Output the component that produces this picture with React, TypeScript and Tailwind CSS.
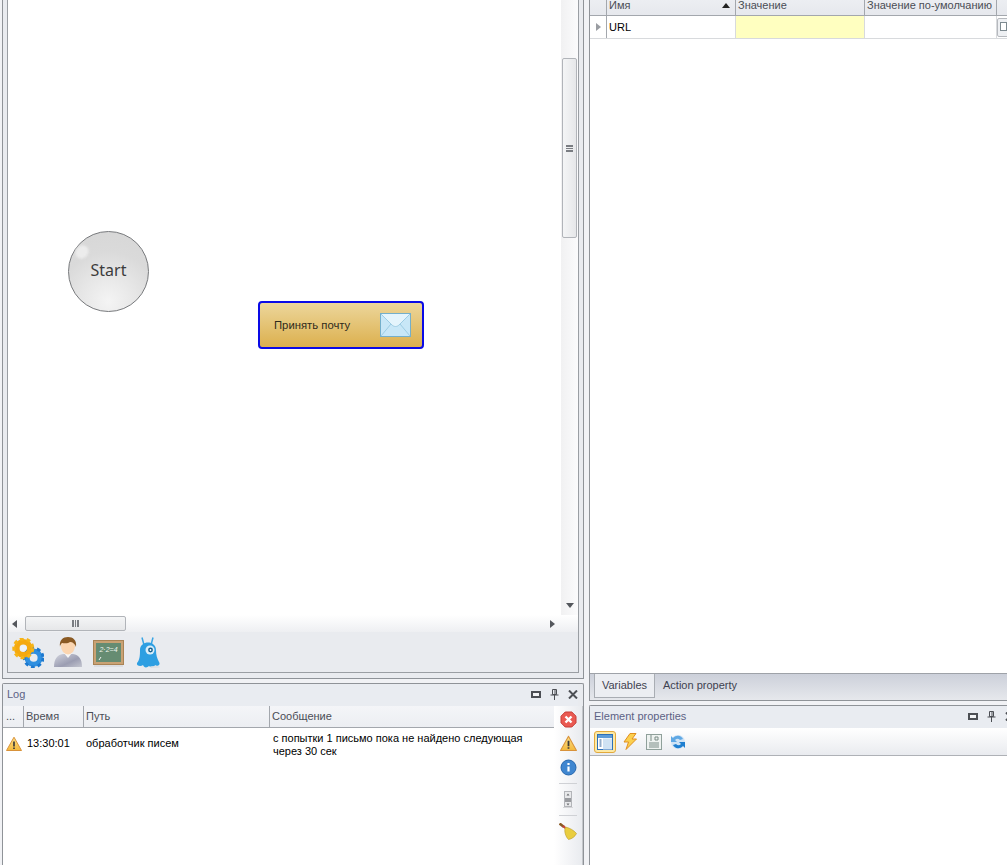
const FONT = "font-['Liberation_Sans','Noto_Sans',sans-serif]";

function Gears() {
  return (
    <svg width="32" height="30" viewBox="0 0 34 32">
      <circle cx="23" cy="21" r="7" fill="none" stroke="#2f8fe0" strokeWidth="5.500" />
      <circle cx="23" cy="21" r="10" fill="none" stroke="#1c78cf" strokeWidth="3" strokeDasharray="4 3.2" />
      <circle cx="12" cy="11" r="7" fill="none" stroke="#f5a90f" strokeWidth="6" />
      <circle cx="12" cy="11" r="10" fill="none" stroke="#f7b416" strokeWidth="3.500" strokeDasharray="4 3.2" />
      <circle cx="12" cy="11" r="3.500" fill="#eef2f6" />
    </svg>
  );
}

function Person() {
  return (
    <svg width="30" height="32" viewBox="0 0 30 32">
      <defs>
        <linearGradient id="suit" x1="0" y1="0" x2="1" y2="1">
          <stop offset="0" stopColor="#d2d4de" />
          <stop offset="0.6" stopColor="#9b9db2" />
          <stop offset="1" stopColor="#c4c6d0" />
        </linearGradient>
      </defs>
      <path d="M1 31c0-8 3-12 9-13h10c6 1 9 5 9 13z" fill="url(#suit)" />
      <path d="M11 17h8l-4 5z" fill="#f6f6f6" />
      <ellipse cx="15" cy="10" rx="7" ry="8.5" fill="#fbd5b0" />
      <path d="M7 11C6 4 10 1 15 1s9 3 8 10c-1-3-3-5-6-5-2 2-7 1-8 1-1 1-2 2-2 4z" fill="#8a5a24" />
    </svg>
  );
}

function Board() {
  return (
    <svg width="31" height="27" viewBox="0 0 31 27">
      <rect x="0.5" y="0.5" width="30" height="24" fill="#c9a274" stroke="#a98355" />
      <rect x="3" y="3" width="25" height="19" fill="#668c72" />
      <text x="15.500" y="12" textAnchor="middle" fontSize="7" fontStyle="italic" fill="#eef4ee" fontFamily="Liberation Sans, sans-serif">2·2=4</text>
      <path d="M6 20l2-3" stroke="#f4f6f4" strokeWidth="1" fill="none" />
      <path d="M1 26h29" stroke="#cfd1d5" strokeWidth="1" />
    </svg>
  );
}

function Monster() {
  return (
    <svg width="25" height="32" viewBox="0 0 25 32">
      <path d="M8 8L6 0.500M15 8l2-7.500" stroke="#3aa5e4" strokeWidth="1.500" fill="none" />
      <path d="M4 13C4 3 20 3 20 13c0 5 1 8 3 12 2 3-2 5-4 3-1 3-4 3-6 1-2 2-5 2-6-1-2 2-7 1-6-2 3-3 3-9 3-13z" fill="#2e9fe2" />
      <circle cx="14" cy="13" r="4.500" fill="#dbeef9" />
      <circle cx="14.500" cy="13" r="2.400" fill="#15608f" />
      <circle cx="14.500" cy="13" r="0.900" fill="#fff" />
      <ellipse cx="19" cy="30" rx="5" ry="1" fill="#dfe1e5" />
    </svg>
  );
}

function Warning({ size = 16 }: { size?: number }) {
  return (
    <svg width={size} height={size} viewBox="0 0 16 16">
      <defs>
        <linearGradient id="warn" x1="0" y1="0" x2="0" y2="1">
          <stop offset="0" stopColor="#fbe08a" />
          <stop offset="1" stopColor="#f4b93c" />
        </linearGradient>
      </defs>
      <path d="M8 1.200L15.500 14.500H0.500z" fill="url(#warn)" stroke="#d8923a" strokeLinejoin="round" />
      <path d="M8 5.500v5M8 11.500v1.500" stroke="#3b3b3b" strokeWidth="1.700" />
    </svg>
  );
}

function ErrorIcon() {
  return (
    <svg width="17" height="17" viewBox="0 0 17 17">
      <path d="M5.200 1h6.600L16 5.200v6.600L11.800 16H5.200L1 11.800V5.200z" fill="#ea5a52" stroke="#c63c36" />
      <path d="M5.500 5.500l6 6M11.500 5.500l-6 6" stroke="#fff" strokeWidth="2.400" />
    </svg>
  );
}

function InfoIcon() {
  return (
    <svg width="17" height="17" viewBox="0 0 17 17">
      <circle cx="8.500" cy="8.500" r="7.500" fill="#3f86d0" stroke="#2566ad" />
      <path d="M8.500 7.500v5" stroke="#fff" strokeWidth="2.200" />
      <path d="M8.500 4v2" stroke="#fff" strokeWidth="2.200" />
    </svg>
  );
}

function ScrollIcon() {
  return (
    <svg width="10" height="17" viewBox="0 0 10 17">
      <rect x="1.500" y="0.500" width="7" height="15" fill="#e8e9eb" stroke="#b3b5b9" />
      <rect x="2" y="7" width="6" height="4" fill="#9a9ca0" />
      <path d="M5 2.500l-1.500 2h3zM5 14.500l-1.500-2h3z" fill="#6a6c70" />
      <path d="M0 16.500h10" stroke="#d5d6d9" />
    </svg>
  );
}

function Broom() {
  return (
    <svg width="18" height="17" viewBox="0 0 18 17">
      <path d="M0.500 0.500l4.500 3.500" stroke="#8a5a24" strokeWidth="2.600" />
      <path d="M4 3l3 2.500" stroke="#c8413a" strokeWidth="2.200" />
      <path d="M6.500 4c4.500 1 8.500 3.500 11 6.500-1.500 3-4.500 5.500-8 6C7 14 4.500 8.500 6.500 4z" fill="#e9cd3f" stroke="#b89a2a" strokeWidth="0.600" />
    </svg>
  );
}

function Maximize() {
  return <div className="h-[7px] w-[10px] border-2 border-[#4c4f54] bg-[#f3f4f6]" />;
}

function Pin() {
  return (
    <svg width="9" height="11" viewBox="0 0 9 11">
      <path d="M2.500 0.500h4v5h-4zM0.500 6h8M4.500 6v5M5 1v4" stroke="#4c4f54" fill="none" />
    </svg>
  );
}

function Close() {
  return (
    <svg width="10" height="9" viewBox="0 0 10 9">
      <path d="M1 0.500l8 8M9 0.500l-8 8" stroke="#4c4f54" strokeWidth="2" />
    </svg>
  );
}

function PanelTitle({ title }: { title: string }) {
  return (
    <div className="flex h-[22px] shrink-0 items-center justify-between bg-[#e9ecf1] pb-px pl-[4px] text-[11px] text-[#5c6285]">
      <span>{title}</span>
      <div className="flex items-center gap-[9px]">
        <Maximize />
        <Pin />
        <Close />
      </div>
    </div>
  );
}

function Envelope() {
  return (
    <svg width="31" height="24" viewBox="0 0 31 24">
      <rect x="0.500" y="0.500" width="30" height="23" fill="#c8e7f7" stroke="#74afcb" />
      <path d="M1 1l11 11c2 2 5 2 7 0L30 1" fill="#e4f4fc" stroke="#9dcce3" />
      <path d="M1 23l10-12M30 23L20 11" stroke="#9dcce3" fill="none" />
    </svg>
  );
}

function Arrow({ dir }: { dir: "up" | "down" | "left" | "right" }) {
  const d = {
    up: "M4 1L8 6H0z",
    down: "M0 1h8L4 6z",
    left: "M6 0v8L1 4z",
    right: "M2 0v8l5-4z",
  }[dir];
  return (
    <svg width="8" height="8" viewBox="0 0 8 8">
      <path d={d} fill="#54575c" />
    </svg>
  );
}

function Canvas() {
  return (
    <div className="relative h-[615px] w-[553px] shrink-0 bg-white">
      <div className="absolute left-[60px] top-[231px] flex h-[81px] w-[81px] items-center justify-center rounded-full border border-[#77797c] bg-[radial-gradient(circle_at_50%_88%,#f4f4f4_0%,#e6e6e6_35%,#dadada_62%,#d6d6d6_100%)] pb-[3px] text-[16px] text-[#3c3c3c] font-['Noto_Sans',sans-serif]">
        <div className="absolute left-[7px] top-[13px] h-[14px] w-[12px] rotate-[40deg] rounded-full bg-[#ececec] blur-[1px]" />
        <span className="relative">Start</span>
      </div>
      <div className="absolute left-[250px] top-[301px] flex h-[48px] w-[166px] items-center justify-between rounded-[4px] border-2 border-[#0a0ae6] bg-[linear-gradient(#ecd69b,#dcb04e)] pl-[14px] pr-[11px] text-[11.300px] text-[#2f2a1c]">
        <span>Принять почту</span>
        <Envelope />
      </div>
    </div>
  );
}

function LogGrid() {
  return (
    <div className="flex min-w-0 flex-1 flex-col bg-white text-[11px] text-black">
      <div className="flex h-[22px] shrink-0 border-b border-[#a3a7ad] bg-[linear-gradient(#f4f5f8,#eceef2)] leading-[20px] text-[#4a4d55]">
        <div className="w-[21px] border-r border-[#a3a7ad] pl-[3px]">...</div>
        <div className="w-[60px] border-r border-[#a3a7ad] pl-[2px]">Время</div>
        <div className="w-[186px] border-r border-[#a3a7ad] pl-[2px]">Путь</div>
        <div className="flex-1 pl-[2px]">Сообщение</div>
      </div>
      <div className="flex pt-[3px]">
        <div className="flex w-[24px] shrink-0 items-start pl-[3px] pt-[5px]">
          <Warning />
        </div>
        <div className="w-[59px] shrink-0 pt-[4px]">13:30:01</div>
        <div className="w-[187px] shrink-0 pt-[4px]">обработчик писем</div>
        <div className="w-[262px] pt-px leading-[13px]">
          с попытки 1 письмо пока не найдено следующая через 30 сек
        </div>
      </div>
    </div>
  );
}

function LogTools() {
  return (
    <div className="flex w-[28px] shrink-0 flex-col items-center bg-[linear-gradient(90deg,#ffffff,#e9ebef)] pt-[5px]">
      <ErrorIcon />
      <div className="mt-[7px]"><Warning size={17} /></div>
      <div className="mt-[7px]"><InfoIcon /></div>
      <div className="mt-[7px] h-px w-[18px] bg-[#cfd1d5]" />
      <div className="mt-[7px]"><ScrollIcon /></div>
      <div className="mt-[7px] h-px w-[18px] bg-[#cfd1d5]" />
      <div className="mt-[7px]"><Broom /></div>
    </div>
  );
}

function VariablesGrid() {
  return (
    <div className="flex-1 bg-white text-[11px]">
      <div className="flex h-[16px] border-b border-[#a3a7ad] bg-[linear-gradient(#eceef2,#e6e8ed)] leading-[10px] text-[#4a4d55]">
        <div className="w-[17px] border-r border-[#a3a7ad]" />
        <div className="flex w-[129px] items-start justify-between border-r border-[#a3a7ad] pl-[2px] pr-[5px]">
          <span>Имя</span>
          <svg width="8" height="5" viewBox="0 0 8 5" className="mt-[3px]">
            <path d="M4 0l4 5H0z" fill="#222" />
          </svg>
        </div>
        <div className="w-[129px] border-r border-[#a3a7ad] pl-[2px]">Значение</div>
        <div className="w-[132px] whitespace-nowrap border-r border-[#a3a7ad] pl-[2px]">Значение по-умолчанию</div>
      </div>
      <div className="flex h-[23px] border-b border-[#d8dadd] leading-[22px] text-black">
        <div className="flex w-[17px] items-center justify-center border-r border-[#a3a7ad]">
          <svg width="5" height="8" viewBox="0 0 5 8">
            <path d="M0 0l5 4-5 4z" fill="#9a9da2" />
          </svg>
        </div>
        <div className="w-[129px] border-r border-[#d8dadd] pl-[2px]">URL</div>
        <div className="w-[129px] border-r border-[#d8dadd] bg-[#ffffc0]" />
        <div className="w-[132px] border-r border-[#d8dadd]" />
        <div className="mt-[2px] h-[19px] w-[14px] rounded-[2px] border border-[#b6b9be] bg-[#eef0f3] pl-[2px] pt-[3px]">
          <div className="h-[9px] w-[7px] border border-[#7d8a90] bg-white" />
        </div>
      </div>
    </div>
  );
}

function PropertyTools() {
  return (
    <div className="flex h-[28px] shrink-0 items-center border-b border-[#aeb1b6] bg-[linear-gradient(#ffffff,#e9ebef)] pl-[4px]">
      <div className="flex h-[22px] w-[22px] items-center justify-center rounded-[3px] border border-[#e2a93c] bg-[#fde9a4]">
        <svg width="16" height="16" viewBox="0 0 16 16">
          <rect x="0.500" y="0.500" width="15" height="15" fill="#fff" stroke="#2c6fb8" />
          <rect x="1" y="1" width="14" height="3" fill="#5c9bd8" />
          <rect x="6" y="4.500" width="9" height="11" fill="#cfe2f3" />
          <path d="M2.500 6h2M2.500 8h2M2.500 10h2M2.500 12h2" stroke="#2c5f96" />
        </svg>
      </div>
      <svg width="14" height="17" viewBox="0 0 14 17" className="ml-[7px]">
        <path d="M7 0.500h6L9 6h4.500L3 16.500 5.500 9H1z" fill="#fbd04f" stroke="#e08e1e" />
      </svg>
      <svg width="16" height="16" viewBox="0 0 16 16" className="ml-[9px]">
        <rect x="0.500" y="0.500" width="15" height="15" fill="#eef2f0" stroke="#8fa09a" />
        <path d="M5 1v6M9 3h3v3H9zM3 9h10M3 11h10M3 13h10" stroke="#7a8c86" fill="none" />
      </svg>
      <svg width="16" height="16" viewBox="0 0 16 16" className="ml-[8px]">
        <circle cx="8" cy="8" r="7" fill="#cfe3f5" />
        <path d="M13 5A6 6 0 0 0 3 4L1 2v6h6L5 6a3.500 3.500 0 0 1 5 0z" fill="#5fa8e4" />
        <path d="M3 11a6 6 0 0 0 10 1l2 2V8H9l2 2a3.500 3.500 0 0 1-5 0z" fill="#1f7fd0" />
      </svg>
    </div>
  );
}

export default function App() {
  return (
    <div className={`flex h-[865px] w-[1007px] overflow-hidden bg-[#f1f2f5] ${FONT}`}>
      <div className="flex w-[589px] shrink-0 flex-col pl-[2px] pr-[5px]">
        <div className="h-[679px] shrink-0 border-x border-b border-[#8f9398] bg-[#e9ebef] px-[4px] pb-[5px]">
          <div className="h-full border-x border-b border-[#9a9ea3]">
            <div className="flex h-[615px]">
              <Canvas />
              <div className="relative flex w-[17px] flex-col items-center bg-[linear-gradient(90deg,#f1f1f2,#fbfbfc)]">
                <div className="mt-[58px] flex h-[180px] w-[15px] items-center justify-center rounded-[2px] border border-[#b1b4b9] bg-[linear-gradient(90deg,#f4f5f6,#e6e7e9)]">
                  <div className="h-[7px] w-[7px] border-y border-[#7a7d82] bg-[repeating-linear-gradient(#7a7d82_0,#7a7d82_1px,transparent_1px,transparent_2px)]" />
                </div>
                <div className="absolute bottom-[5px]"><Arrow dir="down" /></div>
              </div>
            </div>
            <div className="flex h-[17px] items-center bg-[linear-gradient(#ffffff,#eeeff2)] pl-[3px]">
              <Arrow dir="left" />
              <div className="ml-[6px] flex h-[15px] w-[101px] items-center justify-center rounded-[2px] border border-[#b1b4b9] bg-[linear-gradient(#f4f5f6,#e6e7e9)]">
                <div className="h-[7px] w-[7px] border-x border-[#7a7d82] bg-[repeating-linear-gradient(90deg,#7a7d82_0,#7a7d82_1px,transparent_1px,transparent_2px)]" />
              </div>
              <div className="ml-[422px]"><Arrow dir="right" /></div>
            </div>
            <div className="flex h-[40px] items-start pl-[4px] pt-[4px]">
              <div className="mt-[2px]"><Gears /></div>
              <div className="ml-[9px]"><Person /></div>
              <div className="ml-[10px] mt-[4px]"><Board /></div>
              <div className="ml-[12px] mt-px"><Monster /></div>
            </div>
          </div>
        </div>
        <div className="mt-[4px] flex flex-1 flex-col rounded-t-[2px] border-x border-t border-[#8f9398] bg-[#e9ebef]">
          <div className="pr-[5px]">
            <PanelTitle title="Log" />
          </div>
          <div className="flex flex-1 border-r border-[#c4c7cb]">
            <LogGrid />
            <LogTools />
          </div>
        </div>
      </div>
      <div className="flex w-[430px] shrink-0 flex-col">
        <div className="flex h-[701px] shrink-0 flex-col border-b border-l border-[#8f9398]">
          <VariablesGrid />
          <div className="flex h-[27px] shrink-0 border-t border-[#9ea2a8] bg-[linear-gradient(#ccd0da,#e6e8ec)] pl-[4px] text-[11px] text-[#3e4250]">
            <div className="flex h-[24px] w-[61px] items-center justify-center border-x border-b border-[#a9adb3] bg-[#eceef2] pb-px">Variables</div>
            <div className="flex h-[24px] items-center pb-px pl-[8px]">Action property</div>
          </div>
        </div>
        <div className="mt-[4px] flex flex-1 flex-col rounded-t-[2px] border-l border-t border-[#8f9398] bg-white">
          <div className="pr-[4px]">
            <PanelTitle title="Element properties" />
          </div>
          <PropertyTools />
        </div>
      </div>
    </div>
  );
}
